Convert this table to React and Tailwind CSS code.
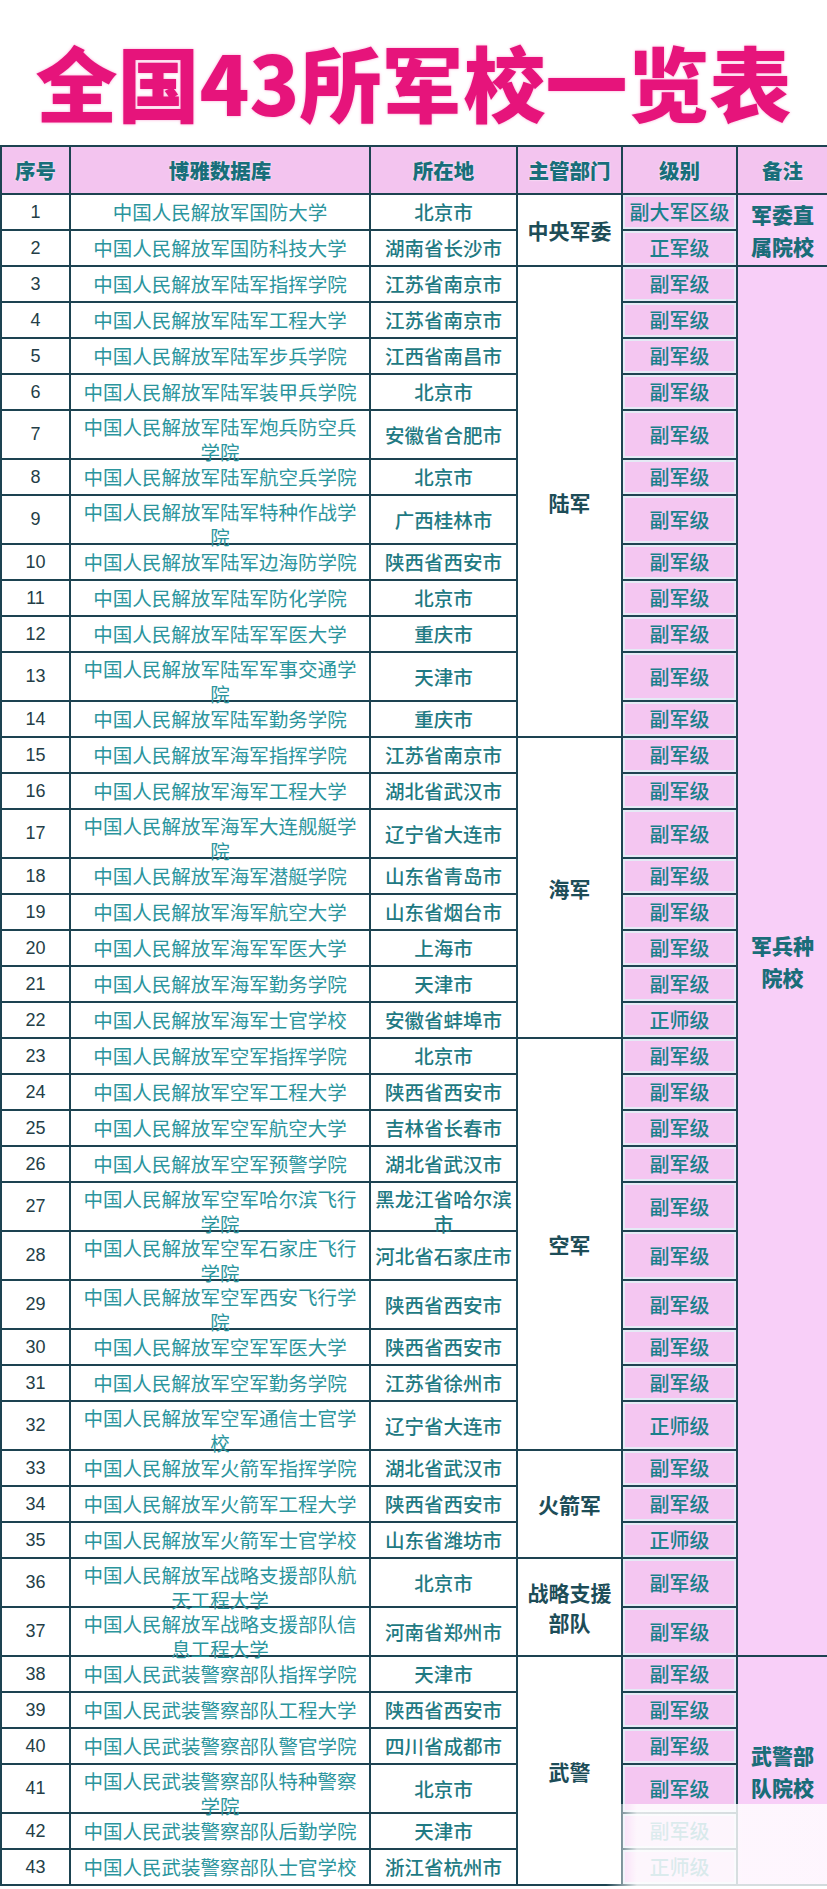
import React from "react";

const rows = [
  ["1", "中国人民解放军国防大学", "北京市", "副大军区级"],
  ["2", "中国人民解放军国防科技大学", "湖南省长沙市", "正军级"],
  ["3", "中国人民解放军陆军指挥学院", "江苏省南京市", "副军级"],
  ["4", "中国人民解放军陆军工程大学", "江苏省南京市", "副军级"],
  ["5", "中国人民解放军陆军步兵学院", "江西省南昌市", "副军级"],
  ["6", "中国人民解放军陆军装甲兵学院", "北京市", "副军级"],
  ["7", "中国人民解放军陆军炮兵防空兵学院", "安徽省合肥市", "副军级"],
  ["8", "中国人民解放军陆军航空兵学院", "北京市", "副军级"],
  ["9", "中国人民解放军陆军特种作战学院", "广西桂林市", "副军级"],
  ["10", "中国人民解放军陆军边海防学院", "陕西省西安市", "副军级"],
  ["11", "中国人民解放军陆军防化学院", "北京市", "副军级"],
  ["12", "中国人民解放军陆军军医大学", "重庆市", "副军级"],
  ["13", "中国人民解放军陆军军事交通学院", "天津市", "副军级"],
  ["14", "中国人民解放军陆军勤务学院", "重庆市", "副军级"],
  ["15", "中国人民解放军海军指挥学院", "江苏省南京市", "副军级"],
  ["16", "中国人民解放军海军工程大学", "湖北省武汉市", "副军级"],
  ["17", "中国人民解放军海军大连舰艇学院", "辽宁省大连市", "副军级"],
  ["18", "中国人民解放军海军潜艇学院", "山东省青岛市", "副军级"],
  ["19", "中国人民解放军海军航空大学", "山东省烟台市", "副军级"],
  ["20", "中国人民解放军海军军医大学", "上海市", "副军级"],
  ["21", "中国人民解放军海军勤务学院", "天津市", "副军级"],
  ["22", "中国人民解放军海军士官学校", "安徽省蚌埠市", "正师级"],
  ["23", "中国人民解放军空军指挥学院", "北京市", "副军级"],
  ["24", "中国人民解放军空军工程大学", "陕西省西安市", "副军级"],
  ["25", "中国人民解放军空军航空大学", "吉林省长春市", "副军级"],
  ["26", "中国人民解放军空军预警学院", "湖北省武汉市", "副军级"],
  ["27", "中国人民解放军空军哈尔滨飞行学院", "黑龙江省哈尔滨市", "副军级"],
  ["28", "中国人民解放军空军石家庄飞行学院", "河北省石家庄市", "副军级"],
  ["29", "中国人民解放军空军西安飞行学院", "陕西省西安市", "副军级"],
  ["30", "中国人民解放军空军军医大学", "陕西省西安市", "副军级"],
  ["31", "中国人民解放军空军勤务学院", "江苏省徐州市", "副军级"],
  ["32", "中国人民解放军空军通信士官学校", "辽宁省大连市", "正师级"],
  ["33", "中国人民解放军火箭军指挥学院", "湖北省武汉市", "副军级"],
  ["34", "中国人民解放军火箭军工程大学", "陕西省西安市", "副军级"],
  ["35", "中国人民解放军火箭军士官学校", "山东省潍坊市", "正师级"],
  ["36", "中国人民解放军战略支援部队航天工程大学", "北京市", "副军级"],
  ["37", "中国人民解放军战略支援部队信息工程大学", "河南省郑州市", "副军级"],
  ["38", "中国人民武装警察部队指挥学院", "天津市", "副军级"],
  ["39", "中国人民武装警察部队工程大学", "陕西省西安市", "副军级"],
  ["40", "中国人民武装警察部队警官学院", "四川省成都市", "副军级"],
  ["41", "中国人民武装警察部队特种警察学院", "北京市", "副军级"],
  ["42", "中国人民武装警察部队后勤学院", "天津市", "副军级"],
  ["43", "中国人民武装警察部队士官学校", "浙江省杭州市", "正师级"],
];

const tall = [7, 9, 13, 17, 27, 28, 29, 32, 36, 37, 41];

// first row of each merged block -> [text, rowspan]
const depts = {
  1: [<>中央军委</>, 2],
  3: [<>陆军</>, 12],
  15: [<>海军</>, 8],
  23: [<>空军</>, 10],
  33: [<>火箭军</>, 3],
  36: [<>战略支援<br />部队</>, 2],
  38: [<>武警</>, 6],
};

const notes = {
  1: [<>军委直<br />属院校</>, 2],
  3: [<>军兵种<br />院校</>, 35],
  38: [<>武警部<br />队院校</>, 6],
};

const cjk = { fontFamily: '"Noto Sans CJK SC", "Noto Sans", sans-serif' };
const bd = "border-2 border-[#1d4351]";

const Row = ({ row }) => {
  const [no, name, place, level] = row;
  const n = Number(no);
  const isTall = tall.includes(n);
  const dept = depts[n];
  const note = notes[n];
  return (
    <tr className={isTall ? "h-[49px]" : "h-[36px]"}>
      <td
        className={`${bd} text-center align-middle text-[18px] text-[#243e47]`}
        style={{ fontFamily: '"Liberation Sans", Arial, sans-serif' }}
      >
        {no}
      </td>
      <td className={`${bd} px-[4px] text-center align-middle text-[19.5px] text-[#2b959d]`}>
        <div className={isTall ? "leading-[25px] -mb-[8px]" : "leading-[24px]"}>{name}</div>
      </td>
      <td className={`${bd} px-[2px] text-center align-middle text-[19.5px] font-medium text-[#1f7a83]`}>
        <div className={isTall && place.length > 7 ? "leading-[25px] -mb-[8px]" : "leading-[24px]"}>{place}</div>
      </td>
      {dept && (
        <td
          rowSpan={dept[1]}
          className={`${bd} bg-white text-center align-middle text-[21px] leading-[30px] font-bold text-[#1d4d58]`}
        >
          {dept[0]}
        </td>
      )}
      <td
        className={`${bd} bg-[#f4c6f1] text-center align-middle text-[20px] leading-[24px] font-medium text-[#1a7f8b] shadow-[inset_0_0_0_2px_#e4eaf5]`}
      >
        {level}
      </td>
      {note && (
        <td
          rowSpan={note[1]}
          className={`${bd} bg-[#f8cff8] text-center align-middle text-[21px] leading-[32px] font-black text-[#1a6d79]`}
        >
          {note[0]}
        </td>
      )}
    </tr>
  );
};

export default function App() {
  const heads = ["序号", "博雅数据库", "所在地", "主管部门", "级别", "备注"];
  return (
    <div className="relative w-[827px] bg-white" style={cjk}>
      <div className="flex h-[145px] items-center justify-center pt-[16px]">
        <h1
          className="text-[82px] leading-none font-black text-[#e6147b]"
          style={{ textShadow: "0 0 3px #f9a8d4" }}
        >
          全国43所军校一览表
        </h1>
      </div>
      <table className="w-[827px] table-fixed border-collapse">
        <colgroup>
          <col className="w-[69px]" />
          <col className="w-[300px]" />
          <col className="w-[147px]" />
          <col className="w-[105px]" />
          <col className="w-[115px]" />
          <col className="w-[91px]" />
        </colgroup>
        <thead>
          <tr className="h-[48px]">
            {heads.map((h) => (
              <th
                key={h}
                className={`${bd} bg-[#f3c4ef] text-center align-middle text-[20.5px] leading-[24px] font-black text-[#186e7a]`}
                style={{ textShadow: "0 0 2px #ffffff" }}
              >
                {h}
              </th>
            ))}
          </tr>
        </thead>
        <tbody>
          {rows.map((r) => (
            <Row key={r[0]} row={r} />
          ))}
        </tbody>
      </table>
      {/* watermark haze, bottom right */}
      <div className="pointer-events-none absolute bottom-0 left-[606px] h-[82px] w-[221px] bg-[linear-gradient(to_right,rgba(255,255,255,0),rgba(255,255,255,0.85)_14%,rgba(255,255,255,0.8))]" />
    </div>
  );
}
